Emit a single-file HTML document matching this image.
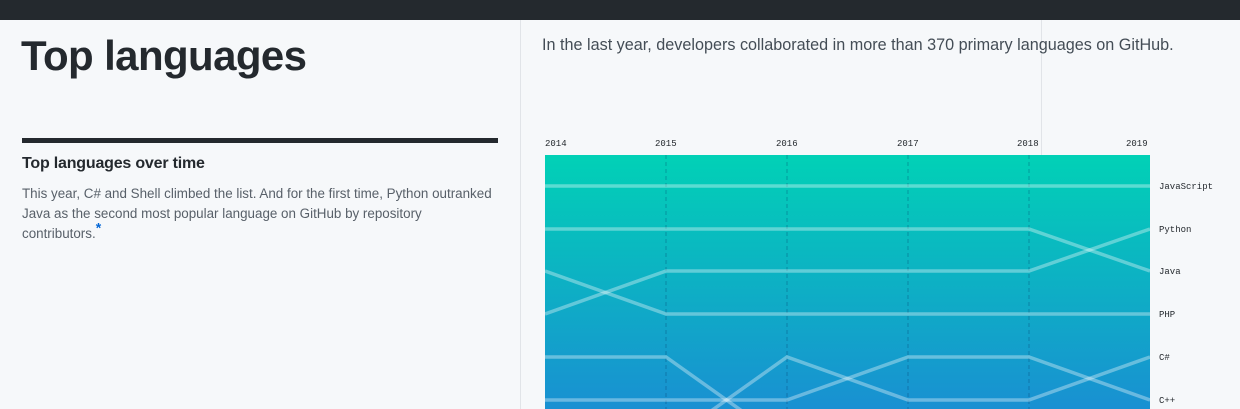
<!DOCTYPE html>
<html><head><style>
html,body{margin:0;width:1240px;height:409px;overflow:hidden}
body{background:#f6f8fa;font-family:"Liberation Sans",sans-serif;position:relative}
.top{position:absolute;left:0;top:0;width:1240px;height:20px;background:#24292e}
.vl{position:absolute;width:1px;background:#e1e4e8}
h1{position:absolute;left:21px;top:32px;margin:0;font-size:42px;font-weight:bold;color:#24292e;letter-spacing:-0.6px}
.intro{position:absolute;left:542px;top:36px;font-size:16.2px;color:#444d56;white-space:nowrap}
.rule{position:absolute;left:22px;top:138px;width:476px;height:5px;background:#24292e}
h3{position:absolute;left:22px;top:155px;margin:0;font-size:16px;font-weight:bold;color:#24292e;letter-spacing:-0.2px}
p{position:absolute;left:22px;top:184px;margin:0;width:520px;font-size:13.4px;line-height:20px;color:#586069;white-space:nowrap}
sup{color:#0366d6;font-size:14px;line-height:0;font-weight:bold}
svg{position:absolute;left:0;top:0}
</style></head><body>
<div class="top"></div>
<div class="vl" style="left:520px;top:20px;height:389px"></div>
<div class="vl" style="left:1041px;top:20px;height:135px"></div>
<h1>Top languages</h1>
<div class="intro">In the last year, developers collaborated in more than 370 primary languages on GitHub.</div>
<div class="rule"></div>
<h3>Top languages over time</h3>
<p>This year, C# and Shell climbed the list. And for the first time, Python outranked<br>Java as the second most popular language on GitHub by repository<br>contributors.<sup>*</sup></p>
<svg width="1240" height="409">
<defs><linearGradient id="g" x1="0" y1="0" x2="0" y2="1">
<stop offset="0" stop-color="#01d1b6"/><stop offset="1" stop-color="#1990d2"/></linearGradient>
<clipPath id="c"><rect x="545" y="155" width="605" height="254"/></clipPath></defs>
<g font-family="Liberation Mono,monospace" font-size="9" fill="#24292e">
<text x="545" y="146">2014</text><text x="655" y="146">2015</text><text x="776" y="146">2016</text><text x="897" y="146">2017</text><text x="1017" y="146">2018</text><text x="1126" y="146">2019</text>
<text x="1159" y="189">JavaScript</text><text x="1159" y="232">Python</text><text x="1159" y="274">Java</text><text x="1159" y="317">PHP</text><text x="1159" y="360">C#</text><text x="1159" y="403">C++</text>
</g>
<rect x="545" y="155" width="605" height="254" fill="url(#g)"/>
<g stroke="rgba(0,40,90,0.3)" stroke-dasharray="4,3" stroke-width="1">
<line x1="666" y1="155" x2="666" y2="409"/><line x1="787" y1="155" x2="787" y2="409"/><line x1="908" y1="155" x2="908" y2="409"/><line x1="1029" y1="155" x2="1029" y2="409"/>
</g>
<g clip-path="url(#c)" fill="none" stroke="rgba(255,255,255,0.35)" stroke-width="3.5">
<polyline points="545,186 1150,186"/>
<polyline points="545,229 1029,229 1150,271"/>
<polyline points="545,314 666,271 1029,271 1150,229"/>
<polyline points="545,271 666,314 1150,314"/>
<polyline points="545,357 666,357 787,443"/>
<polyline points="666,443 787,357 908,400 1029,400 1150,357"/>
<polyline points="545,400 787,400 908,357 1029,357 1150,400"/>
</g>
</svg>
</body></html>
